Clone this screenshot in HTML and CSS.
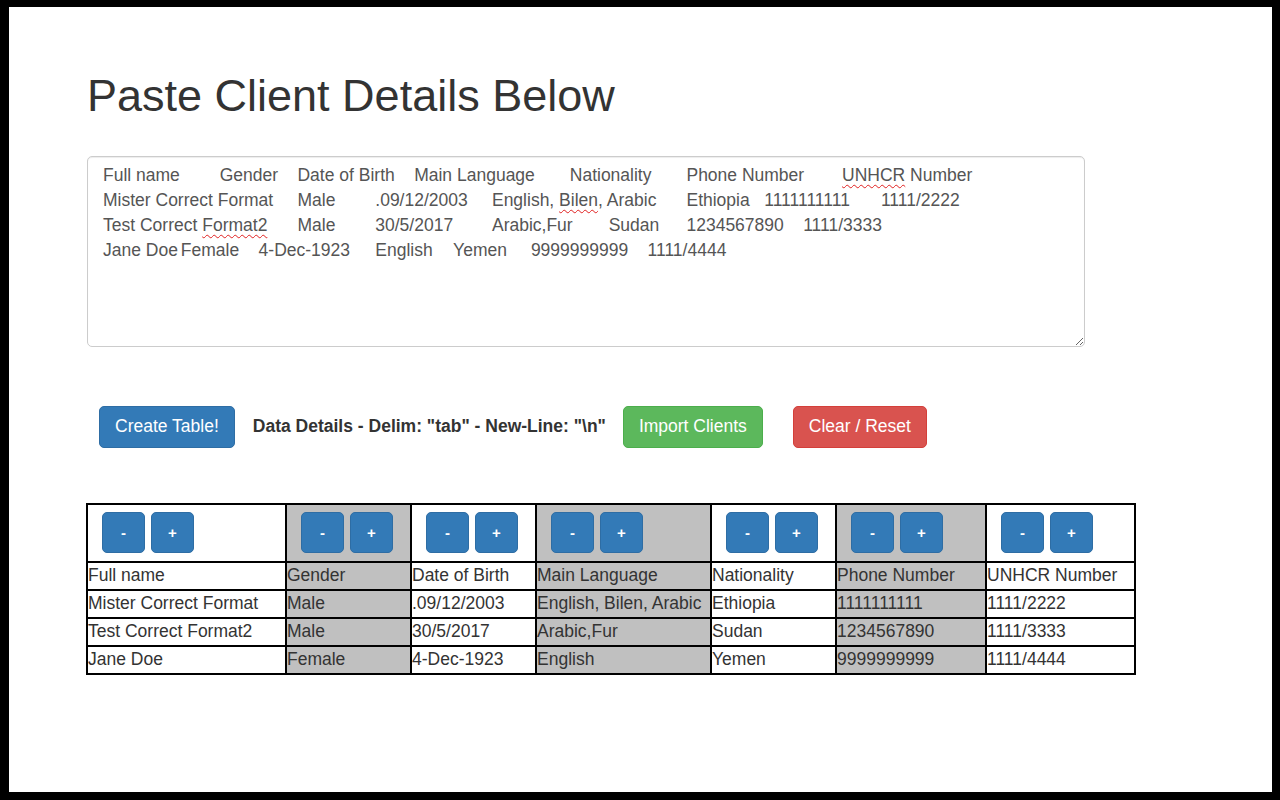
FILE: index.html
```html
<!DOCTYPE html>
<html lang="en">
<head>
<meta charset="utf-8">
<title>Paste Client Details Below</title>
<link rel="stylesheet" href="styles.css">
</head>
<body>
<div class="page">
  <h1 class="title">Paste Client Details Below</h1>
  <div class="paste-box" role="textbox" aria-multiline="true">Full name	Gender	Date of Birth	Main Language	Nationality	Phone Number	<span class="sp">UNHCR</span> Number
Mister Correct Format	Male	.09/12/2003	English, <span class="sp">Bilen</span>, Arabic	Ethiopia	1111111111	1111/2222
Test Correct <span class="sp">Format2</span>	Male	30/5/2017	Arabic,Fur	Sudan	1234567890	1111/3333
Jane Doe	Female	4-Dec-1923	English	Yemen	9999999999	1111/4444</div>

  <div class="actions">
    <button class="btn btn-primary create">Create Table!</button>
    <span class="details">Data Details - Delim: "tab" - New-Line: "\n"</span>
    <button class="btn btn-success import">Import Clients</button>
    <button class="btn btn-danger reset">Clear / Reset</button>
  </div>

  <table class="data">
    <colgroup>
      <col class="c1"><col class="c2"><col class="c3"><col class="c4"><col class="c5"><col class="c6"><col class="c7">
    </colgroup>
    <tr class="ctrl">
      <td><button class="mini">-</button><button class="mini">+</button></td>
      <td class="g"><button class="mini">-</button><button class="mini">+</button></td>
      <td><button class="mini">-</button><button class="mini">+</button></td>
      <td class="g"><button class="mini">-</button><button class="mini">+</button></td>
      <td><button class="mini">-</button><button class="mini">+</button></td>
      <td class="g"><button class="mini">-</button><button class="mini">+</button></td>
      <td><button class="mini">-</button><button class="mini">+</button></td>
    </tr>
    <tr>
      <td>Full name</td><td class="g">Gender</td><td>Date of Birth</td><td class="g">Main Language</td><td>Nationality</td><td class="g">Phone Number</td><td>UNHCR Number</td>
    </tr>
    <tr>
      <td>Mister Correct Format</td><td class="g">Male</td><td>.09/12/2003</td><td class="g">English, Bilen, Arabic</td><td>Ethiopia</td><td class="g">1111111111</td><td>1111/2222</td>
    </tr>
    <tr>
      <td>Test Correct Format2</td><td class="g">Male</td><td>30/5/2017</td><td class="g">Arabic,Fur</td><td>Sudan</td><td class="g">1234567890</td><td>1111/3333</td>
    </tr>
    <tr>
      <td>Jane Doe</td><td class="g">Female</td><td>4-Dec-1923</td><td class="g">English</td><td>Yemen</td><td class="g">9999999999</td><td>1111/4444</td>
    </tr>
  </table>
</div>
</body>
</html>
```

FILE: styles.css
```css
html, body {
  margin: 0;
  padding: 0;
  background: #000;
}

body {
  font-family: "Liberation Sans", Arial, Helvetica, sans-serif;
  font-size: 17.5px;
  line-height: 25px;
  color: #333;
}

.page {
  background: #fff;
  margin: 7px 8px 0 9px;
  height: 785px;
  box-sizing: border-box;
  padding: 64px 0 0 78px;
  overflow: hidden;
}

.title {
  margin: 0 0 35px 0;
  font-size: 45px;
  line-height: 49.5px;
  font-weight: 500;
  color: #333;
}

.paste-box {
  width: 998px;
  height: 191px;
  box-sizing: border-box;
  border: 1px solid #ccc;
  border-radius: 5px;
  padding: 6.5px 15px;
  color: #555;
  white-space: pre;
  tab-size: 8;
  overflow: auto;
  resize: vertical;
  box-shadow: inset 0 1px 1px rgba(0,0,0,.075);
}

.sp {
  text-decoration: underline wavy #e02020;
  text-decoration-thickness: 1px;
  text-underline-offset: 3px;
}

.actions {
  display: flex;
  align-items: center;
  margin-top: 59px;
  height: 42px;
}

.btn {
  font-family: inherit;
  font-size: 17.5px;
  line-height: 25px;
  padding: 7.5px 15px;
  border: 1px solid transparent;
  border-radius: 5px;
  color: #fff;
  cursor: pointer;
}

.btn-primary { background: #337ab7; border-color: #2e6da4; }
.btn-success { background: #5cb85c; border-color: #4cae4c; }
.btn-danger  { background: #d9534f; border-color: #d43f3a; }

.create { margin-left: 12px; }
.details { margin-left: 18px; font-weight: bold; color: #333; }
.import { margin-left: 17px; }
.reset { margin-left: 30px; }

.data {
  margin-top: 55px;
  margin-left: -1px;
  border-collapse: collapse;
  table-layout: fixed;
  width: 1050px;
}

.c1 { width: 199px; }
.c2 { width: 125px; }
.c3 { width: 125px; }
.c4 { width: 175px; }
.c5 { width: 125px; }
.c6 { width: 150px; }
.c7 { width: 149px; }

.data td {
  border: 2px solid #000;
  padding: 0 0 1px 0;
  line-height: 25px;
  white-space: nowrap;
  overflow: hidden;
  color: #333;
}

.data td.g { background: #c0c0c0; }

.data .ctrl td {
  padding: 7px 0 8px 14px;
  line-height: 0;
}

.mini {
  width: 43px;
  height: 41px;
  margin-right: 6px;
  padding: 0;
  border: 1px solid #2e6da4;
  border-radius: 5px;
  background: #337ab7;
  color: #fff;
  font-family: inherit;
  font-size: 15px;
  font-weight: bold;
  line-height: 1;
  vertical-align: top;
}
```
